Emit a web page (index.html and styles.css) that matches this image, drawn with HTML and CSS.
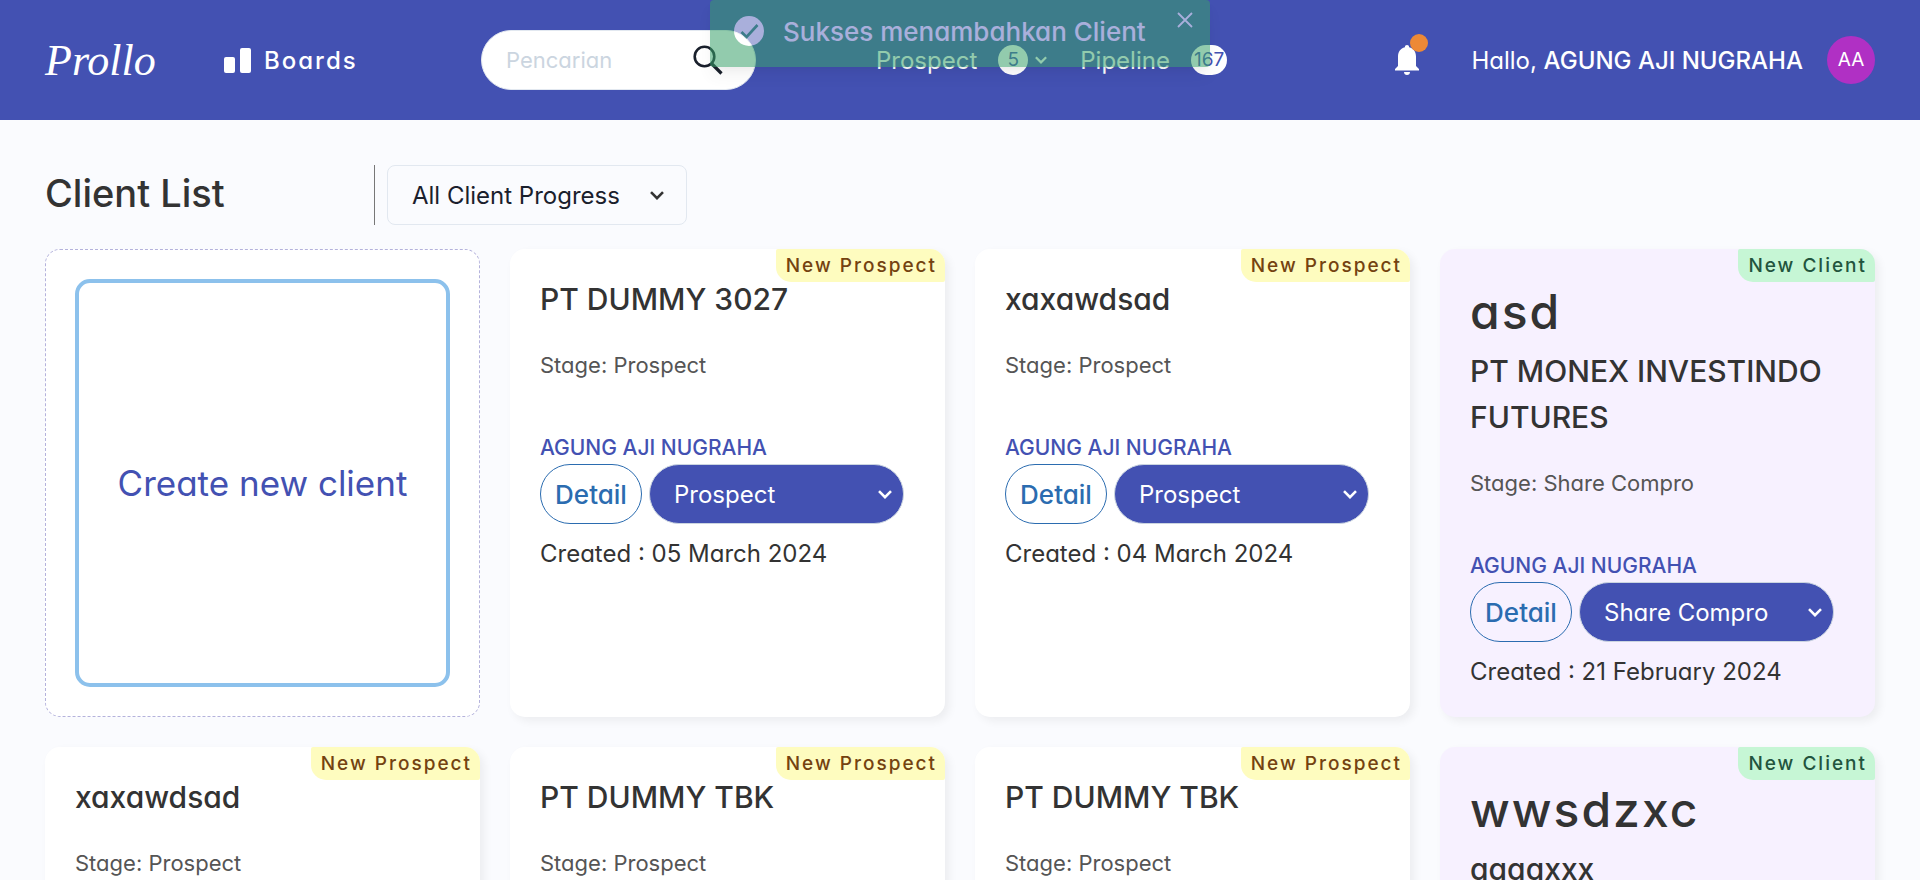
FILE: index.html
```html
<!DOCTYPE html>
<html lang="id">
<head>
<meta charset="utf-8">
<meta name="viewport" content="width=device-width, initial-scale=1">
<title>Prollo - Client List</title>
<link rel="stylesheet" href="styles.css">
</head>
<body>
<svg class="sprite" aria-hidden="true">
  <symbol id="chevron" viewBox="0 0 14 9"><path d="M1 1.2 7 7.2 13 1.2" fill="none" stroke="currentColor" stroke-width="2.6"/></symbol>
</svg>

<header class="topbar">
  <a class="logo" href="#">Prollo</a>
  <a class="boards" href="#">
    <svg width="27" height="25" viewBox="0 0 27 25" aria-hidden="true"><rect y="9" width="11" height="16" rx="2" fill="#fff"/><rect x="16" width="11" height="25" rx="2" fill="#fff"/></svg>
    Boards
  </a>
  <form class="search">
    <input type="search" placeholder="Pencarian" aria-label="Pencarian">
    <button type="button" aria-label="Cari">
      <svg width="30" height="30" viewBox="0 0 30 30" fill="none" stroke="#1a202c" aria-hidden="true"><circle cx="11.5" cy="11.5" r="9.8" stroke-width="2.6"/><path d="M18.5 18.5 28.5 28.5" stroke-width="3.2"/></svg>
    </button>
  </form>
  <nav class="stages">
    <button type="button">Prospect <span class="count">5</span><svg class="nav-chevron" aria-hidden="true"><use href="#chevron"/></svg></button>
    <a href="#">Pipeline <span class="count">167</span></a>
  </nav>
  <div class="account">
    <button class="bell" type="button" aria-label="Notifikasi">
      <svg width="24" height="30" viewBox="0 0 24 30" fill="#fff" aria-hidden="true"><path d="M12 0c1.300 0 2.100.9 2.100 2.300 4.400 1 6.900 4.600 6.900 9.200v9.500l3 3v1.500H0V24l3-3v-9.500C3 6.900 5.500 3.300 9.900 2.300 9.900.9 10.700 0 12 0Z"/><path d="M9 27h6c0 1.800-1.200 3-3 3s-3-1.200-3-3Z"/></svg>
      <span class="dot"></span>
    </button>
    <p class="hello">Hallo, <strong>AGUNG AJI NUGRAHA</strong></p>
    <span class="avatar">AA</span>
  </div>
</header>

<div class="toast" role="status">
  <svg width="30" height="30" viewBox="0 0 30 30" aria-hidden="true"><circle cx="15" cy="15" r="15" fill="#fff"/><path d="M7.500 16 12.500 21 23.500 9" fill="none" stroke="#38a169" stroke-width="2.600"/></svg>
  <span class="toast-text">Sukses menambahkan Client</span>
  <button type="button" aria-label="Tutup"><svg width="16" height="16" viewBox="0 0 16 16" fill="none" stroke="#fff" stroke-width="1.800" aria-hidden="true"><path d="M1 1 15 15M15 1 1 15"/></svg></button>
</div>

<main>
  <div class="toolbar">
    <h1>Client List</h1>
    <div class="filter">
      <div class="picker picker-outline">
        <select aria-label="Client progress"><option>All Client Progress</option></select>
        <svg class="arrow" aria-hidden="true"><use href="#chevron"/></svg>
      </div>
    </div>
  </div>

  <section class="grid">
    <div class="create"><button type="button">Create new client</button></div>

    <article class="card">
      <span class="tag">New Prospect</span>
      <h2>PT DUMMY 3027</h2>
      <p class="stage">Stage: Prospect</p>
      <p class="owner">AGUNG AJI NUGRAHA</p>
      <div class="actions">
        <button class="detail" type="button">Detail</button>
        <div class="picker picker-solid"><select aria-label="Stage"><option>Prospect</option></select><svg class="arrow" aria-hidden="true"><use href="#chevron"/></svg></div>
      </div>
      <p class="created">Created : 05 March 2024</p>
    </article>

    <article class="card">
      <span class="tag">New Prospect</span>
      <h2>xaxawdsad</h2>
      <p class="stage">Stage: Prospect</p>
      <p class="owner">AGUNG AJI NUGRAHA</p>
      <div class="actions">
        <button class="detail" type="button">Detail</button>
        <div class="picker picker-solid"><select aria-label="Stage"><option>Prospect</option></select><svg class="arrow" aria-hidden="true"><use href="#chevron"/></svg></div>
      </div>
      <p class="created">Created : 04 March 2024</p>
    </article>

    <article class="card client">
      <span class="tag">New Client</span>
      <p class="brand">asd</p>
      <h2>PT MONEX INVESTINDO FUTURES</h2>
      <p class="stage">Stage: Share Compro</p>
      <p class="owner">AGUNG AJI NUGRAHA</p>
      <div class="actions">
        <button class="detail" type="button">Detail</button>
        <div class="picker picker-solid"><select aria-label="Stage"><option>Share Compro</option></select><svg class="arrow" aria-hidden="true"><use href="#chevron"/></svg></div>
      </div>
      <p class="created">Created : 21 February 2024</p>
    </article>

    <article class="card">
      <span class="tag">New Prospect</span>
      <h2>xaxawdsad</h2>
      <p class="stage">Stage: Prospect</p>
    </article>

    <article class="card">
      <span class="tag">New Prospect</span>
      <h2>PT DUMMY TBK</h2>
      <p class="stage">Stage: Prospect</p>
    </article>

    <article class="card">
      <span class="tag">New Prospect</span>
      <h2>PT DUMMY TBK</h2>
      <p class="stage">Stage: Prospect</p>
    </article>

    <article class="card client">
      <span class="tag">New Client</span>
      <p class="brand">wwsdzxc</p>
      <h2>aaaaxxx</h2>
    </article>
  </section>
</main>
</body>
</html>
```

FILE: styles.css
```css
* { box-sizing: border-box; }

body {
  margin: 0;
  background: #fafbfe;
  color: #333;
  font-family: Inter, "Open Sans", sans-serif;
  font-feature-settings: "cv11";
  font-size: 24px;
}

h1, h2, p { margin: 0; font-weight: 500; }
a { color: inherit; text-decoration: none; }
button, input, select {
  font: inherit;
  font-feature-settings: inherit;
  color: inherit;
  border: 0;
  background: none;
  padding: 0;
  margin: 0;
}
button { cursor: pointer; }
svg { display: block; flex: none; }
.sprite { position: absolute; width: 0; height: 0; }

.topbar {
  display: flex;
  align-items: center;
  height: 120px;
  padding: 0 45px;
  background: #4351b2;
  color: #fff;
}
.logo {
  width: 179px;
  font-family: "Liberation Serif", serif;
  font-style: italic;
  font-size: 44px;
}
.boards {
  display: flex;
  align-items: center;
  gap: 13px;
  width: 257px;
  font-weight: 500;
  letter-spacing: 2px;
}
.search {
  display: flex;
  align-items: center;
  width: 275px;
  height: 60px;
  padding: 0 32px 0 24px;
  border: 1px solid #e2e8f0;
  border-radius: 30px;
  background: #fff;
}
.search input {
  flex: 1;
  min-width: 0;
  outline: 0;
  font-size: 22px;
}
.search input::placeholder { color: #cbd5e0; opacity: 1; }
.stages {
  display: flex;
  gap: 33px;
  margin-left: 120px;
}
.stages > * {
  display: flex;
  align-items: center;
}
.count {
  min-width: 30px;
  height: 30px;
  margin-left: 21px;
  padding: 0 3px;
  border-radius: 15px;
  background: #fff;
  color: #4351b2;
  font-size: 19px;
  line-height: 30px;
  text-align: center;
}
.nav-chevron { width: 12px; height: 8px; margin-left: 7px; }
.account {
  display: flex;
  align-items: center;
  margin-left: auto;
}
.bell { position: relative; margin-right: 52px; }
.dot {
  position: absolute;
  top: -11px;
  right: -9px;
  width: 18px;
  height: 18px;
  border-radius: 50%;
  background: #ed8936;
}
.hello { font-weight: 400; }
.hello strong { font-weight: 500; }
.avatar {
  width: 48px;
  height: 48px;
  margin-left: 24px;
  border-radius: 50%;
  background: #b030c4;
  font-size: 19px;
  line-height: 48px;
  text-align: center;
}

.toast {
  position: absolute;
  top: 0;
  left: 50%;
  display: flex;
  align-items: flex-start;
  width: 500px;
  height: 67px;
  margin-left: -250px;
  padding: 16px 17px 0 24px;
  border-radius: 4px;
  background: #38a169;
  color: #fff;
  opacity: 0.54;
  box-shadow: 0 10px 15px -3px rgba(0, 0, 0, 0.1), 0 4px 6px -2px rgba(0, 0, 0, 0.05);
}
.toast-text {
  flex: 1;
  margin-left: 19px;
  font-size: 26px;
  font-weight: 500;
  line-height: 32px;
  white-space: nowrap;
}
.toast button { margin-top: -4px; }

main { padding: 45px; }
.toolbar {
  display: flex;
  align-items: center;
  height: 60px;
}
h1 { width: 329px; padding-bottom: 4px; font-size: 38px; }
.filter {
  height: 60px;
  padding-left: 12px;
  border-left: 1px solid #777;
}
.picker { position: relative; }
.picker select {
  appearance: none;
  width: 100%;
  height: 60px;
  padding: 0 24px;
  border: 1px solid #e2e8f0;
}
.picker-outline { width: 300px; }
.picker-outline select { border-radius: 8px; color: #1a202c; }
.arrow {
  position: absolute;
  top: 26px;
  right: 23px;
  width: 14px;
  height: 9px;
  pointer-events: none;
}
.picker-solid { flex: 0 1 255px; color: #fff; }
.picker-solid select {
  border-color: #cbd5e0;
  border-radius: 30px;
  background: #4351b2;
}
.picker-solid .arrow { right: 12px; }

.grid {
  display: grid;
  grid-template-columns: repeat(4, 1fr);
  gap: 30px;
  margin-top: 24px;
}
.create {
  display: flex;
  padding: 29px;
  border: 1px dashed #b4b2dc;
  border-radius: 15px;
  background: #fff;
}
.create button {
  flex: 1;
  border: 4px solid #8cc1ec;
  border-radius: 15px;
  color: #4351b2;
  font-size: 35px;
}
.card {
  position: relative;
  padding: 27px 30px 29px;
  border-radius: 15px;
  background: #fff;
  box-shadow: 4px 4px 10px rgba(0, 0, 0, 0.06);
}
.client { background: #f7f1ff; }
.tag {
  position: absolute;
  top: 0;
  right: 0;
  padding: 0 8px 0 10px;
  border-radius: 2px 15px 2px 15px;
  background: #fefcbf;
  color: #744210;
  font-size: 19px;
  font-weight: 500;
  line-height: 33px;
  letter-spacing: 2px;
}
.client .tag { background: #c6f6d5; color: #22543d; }
.brand {
  font-size: 48px;
  line-height: 72px;
  letter-spacing: 2px;
}
h2 { font-size: 30px; line-height: 46px; }
.stage {
  margin-top: 27px;
  color: #555;
  font-size: 22px;
  font-weight: 400;
  line-height: 32px;
}
.owner {
  margin-top: 51px;
  color: #4351b2;
  font-size: 21px;
  line-height: 32px;
}
.actions { display: flex; gap: 7px; }
.detail {
  width: 102px;
  height: 60px;
  border: 1px solid #2b6cb0;
  border-radius: 30px;
  color: #2b6cb0;
  font-size: 26px;
  font-weight: 500;
}
.created { margin-top: 13px; font-weight: 400; line-height: 33px; }
```
